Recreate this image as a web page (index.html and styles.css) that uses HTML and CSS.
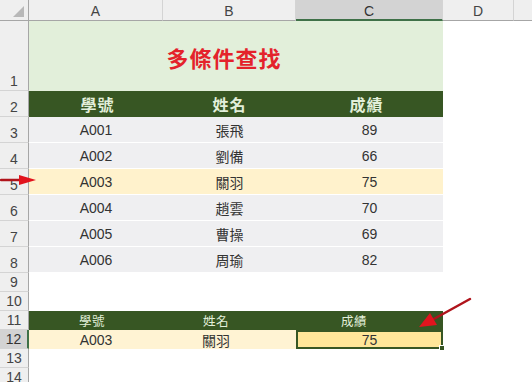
FILE: index.html
```html
<!DOCTYPE html>
<html lang="zh-Hant">
<head>
<meta charset="utf-8">
<title>多條件查找</title>
<link rel="stylesheet" href="styles.css">
</head>
<body>
<div class="sheet">
  <div class="corner"><span class="tri"></span></div>
  <div class="colh">A</div>
  <div class="colh">B</div>
  <div class="colh sel">C</div>
  <div class="colh">D</div>
  <div class="colh last"></div>

  <div class="rowh">1</div>
  <div class="title">多條件查找</div>
  <div class="blank"></div><div class="blank"></div>

  <div class="rowh">2</div>
  <div class="hd c1">學號</div><div class="hd c2">姓名</div><div class="hd c3">成績</div>
  <div class="blank"></div><div class="blank"></div>

  <div class="rowh">3</div>
  <div class="dc">A001</div><div class="dc">張飛</div><div class="dc">89</div>
  <div class="blank"></div><div class="blank"></div>

  <div class="rowh">4</div>
  <div class="dc">A002</div><div class="dc">劉備</div><div class="dc">66</div>
  <div class="blank"></div><div class="blank"></div>

  <div class="rowh">5</div>
  <div class="dc hl">A003</div><div class="dc hl">關羽</div><div class="dc hl">75</div>
  <div class="blank"></div><div class="blank"></div>

  <div class="rowh">6</div>
  <div class="dc">A004</div><div class="dc">趙雲</div><div class="dc">70</div>
  <div class="blank"></div><div class="blank"></div>

  <div class="rowh">7</div>
  <div class="dc">A005</div><div class="dc">曹操</div><div class="dc">69</div>
  <div class="blank"></div><div class="blank"></div>

  <div class="rowh">8</div>
  <div class="dc">A006</div><div class="dc">周瑜</div><div class="dc">82</div>
  <div class="blank"></div><div class="blank"></div>

  <div class="rowh">9</div>
  <div class="blank"></div><div class="blank"></div><div class="blank"></div><div class="blank"></div><div class="blank"></div>

  <div class="rowh">10</div>
  <div class="blank"></div><div class="blank"></div><div class="blank"></div><div class="blank"></div><div class="blank"></div>

  <div class="rowh">11</div>
  <div class="hd2 s1">學號</div><div class="hd2 s2">姓名</div><div class="hd2 s3">成績</div>
  <div class="blank"></div><div class="blank"></div>

  <div class="rowh sel">12</div>
  <div class="res">A003</div><div class="res s2">關羽</div>
  <div class="res active">75<span class="handle"></span></div>
  <div class="blank"></div><div class="blank"></div>

  <div class="rowh">13</div>
  <div class="blank"></div><div class="blank"></div><div class="blank"></div><div class="blank"></div><div class="blank"></div>

  <div class="rowh">14</div>
  <div class="blank"></div><div class="blank"></div><div class="blank"></div><div class="blank"></div><div class="blank"></div>
</div>

<svg class="arrows" width="532" height="382" viewBox="0 0 532 382">
  <line x1="1" y1="180" x2="22" y2="180" stroke="#b0141c" stroke-width="2.5" stroke-linecap="round"/>
  <polygon points="19,175 36,180 19,185" fill="#e2141e"/>
  <line x1="470" y1="299" x2="432" y2="320" stroke="#b0141c" stroke-width="2.5" stroke-linecap="round"/>
  <polygon points="419,327 430,313 437,325" fill="#e2141e"/>
</svg>
</body>
</html>
```

FILE: styles.css
```css
html, body {
  margin: 0;
  padding: 0;
  background: #ffffff;
  overflow: hidden;
}

body {
  width: 532px;
  height: 382px;
  position: relative;
  font-family: "Liberation Sans", "Noto Sans CJK TC", sans-serif;
}

.sheet {
  display: grid;
  grid-template-columns: 29px 134px 133px 147px 71px 1fr;
  grid-template-rows: 21px 70px repeat(7, 26px) repeat(6, 19px);
}

.sheet > div {
  box-sizing: border-box;
  display: flex;
  align-items: center;
  justify-content: center;
  min-width: 0;
}

.corner {
  background: #efefef;
  border-right: 1px solid #a6a6a6;
  border-bottom: 1px solid #a6a6a6;
  position: relative;
}

.tri {
  position: absolute;
  right: 4px;
  bottom: 3px;
  width: 0;
  height: 0;
  border-left: 11px solid transparent;
  border-bottom: 11px solid #b8b8b8;
}

.colh {
  background: #efefef;
  border-right: 1px solid #d4d4d4;
  border-bottom: 1px solid #a6a6a6;
  font-size: 14px;
  color: #444;
  padding-top: 2px;
}

.colh.sel {
  background: #d3d3d3;
  border-bottom: 2px solid #3f7148;
  color: #333;
}

.colh.last {
  border-right: none;
}

.rowh {
  background: #efefef;
  border-right: 1px solid #a6a6a6;
  border-bottom: 1px solid #d4d4d4;
  font-size: 14px;
  color: #444;
  align-items: flex-end !important;
  padding-bottom: 1px;
  line-height: 16px;
}

.rowh.sel {
  background: #d3d3d3;
  border-right: 2px solid #3f7148;
  color: #333;
}

.title {
  grid-column: 2 / span 3;
  background: #e2efda;
  color: #e4222b;
  font-family: "Noto Sans CJK TC", sans-serif;
  font-weight: 700;
  font-size: 22px;
  letter-spacing: 1px;
  padding-right: 24px;
  padding-top: 2px;
}

.hd {
  background: #375623;
  color: #e2efda;
  font-family: "Noto Sans CJK TC", sans-serif;
  font-weight: 700;
  font-size: 16px;
  letter-spacing: 1px;
}

.hd.c1 { padding-left: 3px; }
.hd.c3 { padding-right: 6px; }

.dc {
  background: #efeff1;
  border-bottom: 1px solid #ffffff;
  color: #333;
  font-size: 14px;
  font-family: "Liberation Sans", "Noto Sans CJK TC", sans-serif;
}

.dc.hl {
  background: #fff2cc;
}

.hd2 {
  background: #375623;
  color: #e2efda;
  font-family: "Noto Sans CJK TC", sans-serif;
  font-size: 12.5px;
  letter-spacing: 0.5px;
}

.hd2.s1 { padding-right: 8px; }
.hd2.s2 { padding-right: 27px; }
.hd2.s3 { padding-right: 31px; }

.res {
  background: #fff3d3;
  color: #333;
  font-size: 14px;
  font-family: "Liberation Sans", "Noto Sans CJK TC", sans-serif;
}

.res.s2 { padding-right: 27px; }

.res.active {
  background: #ffe699;
  border: 2px solid #375623;
  position: relative;
}

.handle {
  position: absolute;
  right: -4px;
  bottom: -4px;
  width: 6px;
  height: 6px;
  background: #375623;
  border: 1px solid #fff;
  box-sizing: border-box;
}

.arrows {
  position: absolute;
  left: 0;
  top: 0;
  pointer-events: none;
}
```
